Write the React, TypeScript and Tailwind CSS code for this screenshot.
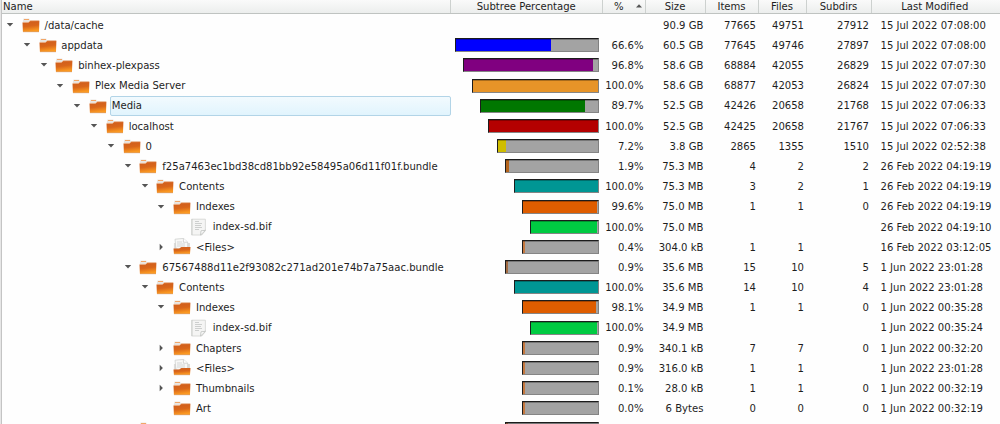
type Kind = 'folder' | 'files' | 'file';

type Row = {
  name: string;
  depth: number;
  kind: Kind;
  arrow?: 'open' | 'closed';
  fill?: number;
  color?: string;
  pct?: string;
  size: string;
  items?: string;
  files?: string;
  subdirs?: string;
  modified: string;
  selected?: boolean;
};

const ROWS: Row[] = [
  { name: '/data/cache', depth: 0, kind: 'folder', arrow: 'open', size: '90.9 GB', items: '77665', files: '49751', subdirs: '27912', modified: '15 Jul 2022 07:08:00' },
  { name: 'appdata', depth: 1, kind: 'folder', arrow: 'open', fill: 66.6, color: '#0000ff', pct: '66.6%', size: '60.5 GB', items: '77645', files: '49746', subdirs: '27897', modified: '15 Jul 2022 07:08:00' },
  { name: 'binhex-plexpass', depth: 2, kind: 'folder', arrow: 'open', fill: 96.4, color: '#800080', pct: '96.8%', size: '58.6 GB', items: '68884', files: '42055', subdirs: '26829', modified: '15 Jul 2022 07:07:30' },
  { name: 'Plex Media Server', depth: 3, kind: 'folder', arrow: 'open', fill: 100, color: '#e79428', pct: '100.0%', size: '58.6 GB', items: '68877', files: '42053', subdirs: '26824', modified: '15 Jul 2022 07:07:30' },
  { name: 'Media', depth: 4, kind: 'folder', arrow: 'open', fill: 89.3, color: '#007700', pct: '89.7%', size: '52.5 GB', items: '42426', files: '20658', subdirs: '21768', modified: '15 Jul 2022 07:06:33', selected: true },
  { name: 'localhost', depth: 5, kind: 'folder', arrow: 'open', fill: 100, color: '#b40000', pct: '100.0%', size: '52.5 GB', items: '42425', files: '20658', subdirs: '21767', modified: '15 Jul 2022 07:06:33' },
  { name: '0', depth: 6, kind: 'folder', arrow: 'open', fill: 8, color: '#cfbd00', pct: '7.2%', size: '3.8 GB', items: '2865', files: '1355', subdirs: '1510', modified: '15 Jul 2022 02:52:38' },
  { name: 'f25a7463ec1bd38cd81bb92e58495a06d11f01f.bundle', depth: 7, kind: 'folder', arrow: 'open', fill: 3.4, color: '#b5651d', pct: '1.9%', size: '75.3 MB', items: '4', files: '2', subdirs: '2', modified: '26 Feb 2022 04:19:19' },
  { name: 'Contents', depth: 8, kind: 'folder', arrow: 'open', fill: 100, color: '#009694', pct: '100.0%', size: '75.3 MB', items: '3', files: '2', subdirs: '1', modified: '26 Feb 2022 04:19:19' },
  { name: 'Indexes', depth: 9, kind: 'folder', arrow: 'open', fill: 98.8, color: '#de5d00', pct: '99.6%', size: '75.0 MB', items: '1', files: '1', subdirs: '0', modified: '26 Feb 2022 04:19:19' },
  { name: 'index-sd.bif', depth: 10, kind: 'file', fill: 98.8, color: '#00cb42', pct: '100.0%', size: '75.0 MB', modified: '26 Feb 2022 04:19:10' },
  { name: '<Files>', depth: 9, kind: 'files', arrow: 'closed', fill: 1.8, color: '#c5783f', pct: '0.4%', size: '304.0 kB', items: '1', files: '1', modified: '16 Feb 2022 03:12:05' },
  { name: '67567488d11e2f93082c271ad201e74b7a75aac.bundle', depth: 7, kind: 'folder', arrow: 'open', fill: 1.2, color: '#a36b42', pct: '0.9%', size: '35.6 MB', items: '15', files: '10', subdirs: '5', modified: '1 Jun 2022 23:01:28' },
  { name: 'Contents', depth: 8, kind: 'folder', arrow: 'open', fill: 100, color: '#009694', pct: '100.0%', size: '35.6 MB', items: '14', files: '10', subdirs: '4', modified: '1 Jun 2022 23:01:28' },
  { name: 'Indexes', depth: 9, kind: 'folder', arrow: 'open', fill: 97.8, color: '#de5d00', pct: '98.1%', size: '34.9 MB', items: '1', files: '1', subdirs: '0', modified: '1 Jun 2022 00:35:28' },
  { name: 'index-sd.bif', depth: 10, kind: 'file', fill: 98.8, color: '#00cb42', pct: '100.0%', size: '34.9 MB', modified: '1 Jun 2022 00:35:24' },
  { name: 'Chapters', depth: 9, kind: 'folder', arrow: 'closed', fill: 1.8, color: '#c5783f', pct: '0.9%', size: '340.1 kB', items: '7', files: '7', subdirs: '0', modified: '1 Jun 2022 00:32:20' },
  { name: '<Files>', depth: 9, kind: 'files', arrow: 'closed', fill: 1.8, color: '#c5783f', pct: '0.9%', size: '316.0 kB', items: '1', files: '1', modified: '1 Jun 2022 23:01:28' },
  { name: 'Thumbnails', depth: 9, kind: 'folder', arrow: 'closed', fill: 1.8, color: '#c5783f', pct: '0.1%', size: '28.0 kB', items: '1', files: '1', subdirs: '0', modified: '1 Jun 2022 00:32:19' },
  { name: 'Art', depth: 9, kind: 'folder', fill: 1.8, color: '#c5783f', pct: '0.0%', size: '6 Bytes', items: '0', files: '0', subdirs: '0', modified: '1 Jun 2022 00:32:19' },
  { name: '', depth: 7, kind: 'folder', fill: 1.2, color: '#a36b42', size: '', modified: '' },
];

const COLS = 'grid grid-cols-[449px_151.5px_43px_60px_53px_48px_65px_126.5px]';
const HEAD = 'flex items-center justify-center border-r border-[#cdd1cf]';

function Arrow({ dir }: { dir?: 'open' | 'closed' }) {
  return (
    <svg viewBox="0 0 8 8" className="h-2 w-2 shrink-0">
      {dir === 'open' && <path d="M0.8 2.1H7.2L4 5.4Z" fill="#555" />}
      {dir === 'closed' && <path d="M2.7 0.7V7.3L5.9 4Z" fill="#555" />}
    </svg>
  );
}

function Icon({ kind }: { kind: Kind }) {
  if (kind === 'file') {
    return (
      <svg viewBox="0 0 18 18" className="h-[18px] w-[18px] shrink-0">
        <path d="M1.6 1.2H15.4V12.6L11.8 17H1.6Z" fill="#f5f5f4" stroke="#d2d3d1" strokeWidth=".8" />
        <path d="M2.2 1.5V16.5" stroke="#c2c5c3" strokeWidth="1.2" strokeDasharray="1 1" />
        <path d="M5 3.5H9M5 5.5H12M5 7.5H11M5 9.5H12M5 11.5H9" stroke="#c3c5c4" strokeWidth=".8" />
        <path d="M10.6 17L11 12.8L15.4 12.3Z" fill="#fff" stroke="#b5b7b5" strokeWidth=".7" />
      </svg>
    );
  }
  return (
    <svg viewBox="0 0 18 18" className="h-[18px] w-[18px] shrink-0">
      <defs>
        <linearGradient id="folder" x1="0" y1="0" x2="0.2" y2="1">
          <stop offset="0" stopColor="#dd7430" />
          <stop offset="0.25" stopColor="#d2601c" />
          <stop offset="0.55" stopColor="#d9661a" />
          <stop offset="1" stopColor="#fb9a22" />
        </linearGradient>
      </defs>
      {kind === 'folder' ? (
        <>
          <path d="M0.9 4.2L1.5 2.6H7.2L8 4.2H17V8H0.9Z" fill="#e9e7e4" />
          <path d="M2 3.5H7" stroke="#f2a668" strokeWidth="1" />
          <path d="M0.5 6.4H6.4L8.4 4.8H17.4L17 15.7H0.9Z" fill="url(#folder)" />
          <path d="M0.8 6.3H6.4L8.4 4.7H17.2" fill="none" stroke="#f0ae7e" strokeWidth=".5" />
        </>
      ) : (
        <>
          <path d="M0.9 5H17V12H0.9Z" fill="#dedddb" />
          <path d="M2 1.2L10.5 0.4L14.7 4.2V11H3Z" fill="#f8f8f7" stroke="#c9cbc9" strokeWidth=".7" />
          <path d="M10.4 .5V4.2H14.6" fill="#fff" stroke="#bbb" strokeWidth=".6" />
          <path d="M4 4H9M4 6H12M4 8H12" stroke="#c6c8c7" strokeWidth=".7" />
          <path d="M0.5 10.4H6.2L8.3 8.9H17.5L17 15.8H0.9Z" fill="url(#folder)" />
        </>
      )}
      <path d="M1 15.8H17" stroke="#a84d19" strokeOpacity=".5" strokeWidth=".6" />
    </svg>
  );
}

function Bar({ row }: { row: Row }) {
  if (row.fill === undefined) return <div />;
  return (
    <div className="flex items-center pr-[3.5px]">
      <div
        className="h-[14px] border-b border-l-[1.5px] border-r border-t border-b-[#858585] border-l-[#1c1c1c] border-r-[#808080] border-t-[#1c1c1c] bg-[#a3a3a3] shadow-[inset_0_1px_0_#00000044]"
        style={{ marginLeft: 4 + (row.depth - 1) * 8.36, width: 144 - (row.depth - 1) * 8.36 }}
      >
        <div className="h-full min-w-[2.2px] shadow-[inset_0_1px_0_#00000044]" style={{ width: `${row.fill}%`, background: row.color }} />
      </div>
    </div>
  );
}

function TreeRow({ row }: { row: Row }) {
  return (
    <div className={`${COLS} h-[20.18px] shrink-0`}>
      <div className="flex items-center" style={{ paddingLeft: 4 + row.depth * 16.83 }}>
        <Arrow dir={row.arrow} />
        <div className="ml-[7.7px] flex"><Icon kind={row.kind} /></div>
        <div
          className={`ml-[2.5px] flex h-[19.5px] flex-1 items-center rounded-[2px] border pt-[0.6px] pl-[1.3px] ${row.selected ? 'border-[#b2d4e7] bg-gradient-to-b from-[#f2fafe] to-[#e1f4fd]' : 'border-transparent'}`}
        >
          {row.name}
        </div>
      </div>
      <Bar row={row} />
      <div className="flex items-center justify-end pt-[0.6px] pr-[2px]">{row.pct}</div>
      <div className="flex items-center justify-end pt-[0.6px] pr-[2.1px]">{row.size}</div>
      <div className="flex items-center justify-end pt-[0.6px] pr-[2.5px]">{row.items}</div>
      <div className="flex items-center justify-end pt-[0.6px] pr-[2.5px]">{row.files}</div>
      <div className="flex items-center justify-end pt-[0.6px] pr-[2.5px]">{row.subdirs}</div>
      <div className="flex items-center pt-[0.6px] pl-[9px]">{row.modified}</div>
    </div>
  );
}

export default function App() {
  return (
    <div className="flex h-[424px] w-[1000px] flex-col overflow-hidden border-l border-[#e6e6e6] bg-[#fefefe] font-['DejaVu_Sans_Condensed','DejaVu_Sans',sans-serif] text-[11.2px] leading-none whitespace-nowrap text-[#1e1e1e] [font-stretch:condensed]">
      <div className="flex min-h-0 flex-1 flex-col border-l border-[#c4c4c4]">
        <div className={`${COLS} h-[14px] shrink-0 border-b border-[#bfc3c1] bg-gradient-to-b from-[#fafafa] to-[#eceeed]`}>
          <div className="flex items-center border-r border-[#cdd1cf] pl-[1px]">Name</div>
          <div className={HEAD}>Subtree Percentage</div>
          <div className="flex items-center justify-end gap-[12px] border-r border-[#cdd1cf] pr-[3px]">
            %
            <svg viewBox="0 0 6 4" className="mb-[2px] h-1 w-1.5"><path d="M0 3.5L3 .3L6 3.5Z" fill="#555" /></svg>
          </div>
          <div className={HEAD}>Size</div>
          <div className={HEAD}>Items</div>
          <div className={HEAD}>Files</div>
          <div className={HEAD}>Subdirs</div>
          <div className="flex items-center justify-center">Last Modified</div>
        </div>
        <div className="flex min-h-0 flex-1 flex-col overflow-hidden pt-[1px]">
          {ROWS.map((row, i) => <TreeRow key={i} row={row} />)}
        </div>
      </div>
    </div>
  );
}
